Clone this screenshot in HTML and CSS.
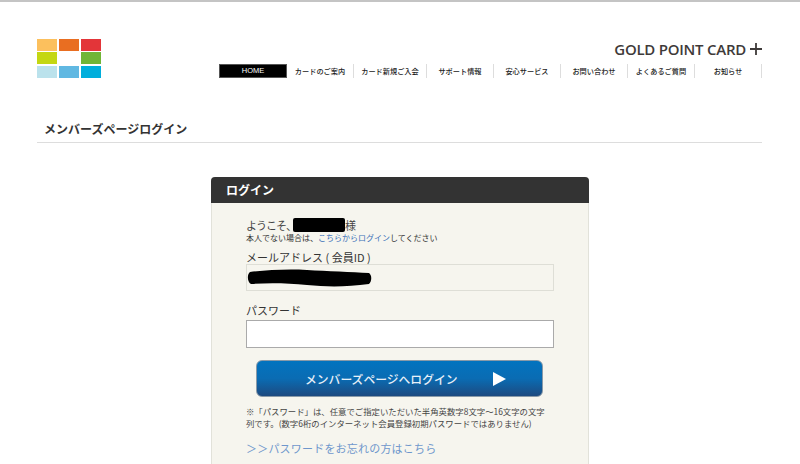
FILE: index.html
```html
<!DOCTYPE html>
<html lang="ja">
<head>
<meta charset="utf-8">
<title>メンバーズページログイン</title>
<link rel="stylesheet" href="styles.css">
</head>
<body>
<div class="page">
  <header class="header">
    <div class="logo">
      <span class="c1"></span><span class="c2"></span><span class="c3"></span>
      <span class="c4"></span><span class="c0"></span><span class="c5"></span>
      <span class="c6"></span><span class="c7"></span><span class="c8"></span>
    </div>
    <div class="header-right">
      <div class="brand">GOLD POINT CARD <svg class="plus" viewBox="0 0 12 12" width="12" height="12"><path d="M0 6H12M6 0V12" stroke="#3e3a39" stroke-width="1.8" fill="none"/></svg></div>
      <nav class="nav">
        <a class="nav-item home">HOME</a>
        <a class="nav-item">カードのご案内</a>
        <a class="nav-item wide">カード新規ご入会</a>
        <a class="nav-item">サポート情報</a>
        <a class="nav-item">安心サービス</a>
        <a class="nav-item">お問い合わせ</a>
        <a class="nav-item">よくあるご質問</a>
        <a class="nav-item">お知らせ</a>
      </nav>
    </div>
  </header>
  <h1 class="title">メンバーズページログイン</h1>
  <section class="card">
    <h2 class="card-head">ログイン</h2>
    <div class="card-body">
      <p class="welcome"><span class="greet">ようこそ、</span><span class="mask"></span>様</p>
      <p class="notice">本人でない場合は、<a class="link">こちらからログイン</a>してください</p>
      <label class="label">メールアドレス<span class="paren">(</span>会員ID<span class="paren">)</span></label>
      <div class="field readonly"><svg class="scribble" viewBox="0 0 125 18" width="125" height="18"><path d="M3 3C20 1 40 0 60 1C80 2 105 3 122 4C125 6 125 12 122 15C100 18 80 18 60 16C40 14 20 14 4 15C0 13 0 5 3 3Z" fill="#000"/></svg></div>
      <label class="label pw">パスワード</label>
      <div class="field input"></div>
      <button class="submit"><span>メンバーズページへログイン</span><svg class="arrow" viewBox="0 0 13 14" width="13" height="14"><path d="M0 0L13 7L0 14Z" fill="#fff"/></svg></button>
      <p class="note">※「パスワード」は、任意でご指定いただいた半角英数字8文字〜16文字の文字<br>列です。(数字6桁のインターネット会員登録初期パスワードではありません)</p>
      <a class="forgot">＞＞パスワードをお忘れの方はこちら</a>
    </div>
  </section>
</div>
</body>
</html>
```
FILE: styles.css
```css
* { box-sizing: border-box; }
html, body { margin: 0; padding: 0; height: 464px; overflow: hidden; background: #fff; }
body { border-top: 2px solid #c4c4c4; font-family: "Noto Sans CJK JP", "Liberation Sans", sans-serif; color: #333; }
.page { width: 725px; margin-left: 37px; }
.header { display: flex; justify-content: space-between; padding-top: 37px; height: 96px; }
.logo { display: grid; grid-template-columns: repeat(3, 20px); grid-auto-rows: 12px; gap: 1.4px 2px; width: 64px; height: 39px; }
.logo span { display: block; }
.c0 { background: #fff; }
.c1 { background: #fcc05d; }
.c2 { background: #e96e21; }
.c3 { background: #e33539; }
.c4 { background: #c4d712; }
.c5 { background: #70b536; }
.c6 { background: #bbe2ec; }
.c7 { background: #60b8e2; }
.c8 { background: #00aedc; }
.header-right { display: flex; flex-direction: column; align-items: flex-end; }
.brand { font-family: "Open Sans", "Liberation Sans", sans-serif; font-weight: 600; font-size: 15px; line-height: 20px; color: #3e3a39; display: flex; align-items: center; gap: 4px; letter-spacing: -.25px; }
.nav { display: flex; margin-top: 5px; }
.nav-item { width: 67px; height: 14px; font-size: 7.2px; line-height: 14px; text-align: center; color: #222; border-right: 1px solid #ddd; white-space: nowrap; font-weight: 500; }
.nav-item.wide { width: 73px; }
.nav-item.home { width: 68px; background: #000; color: #fff; border: 1px solid #555; font-family: "Liberation Sans", sans-serif; font-size: 7.5px; line-height: 12px; }
.title { margin: 0; height: 45px; padding: 22px 0 0 7px; font-size: 12px; line-height: 18px; font-weight: 700; color: #333; border-bottom: 1px solid #ddd; }
.card { width: 378px; margin: 34px 0 0 174px; border-radius: 4px 4px 0 0; border: 1px solid #e2e2da; border-top: 0; background: #f6f5ee; height: 300px; }
.card-head { margin: 0 -1px; height: 26px; background: #333; color: #fff; border-radius: 4px 4px 0 0; font-size: 12px; line-height: 25px; font-weight: 700; padding-left: 15px; }
.card-body { padding: 14px 34px 0; }
.welcome { margin: 0; font-size: 11px; line-height: 16px; color: #444; display: flex; align-items: center; }
.greet { letter-spacing: -1px; }
.mask { display: inline-block; width: 52px; height: 14px; background: #000; border-radius: 2px; margin-left: -3px; }
.notice { margin: -1px 0 0; font-size: 8px; line-height: 12px; color: #333; }
.link { color: #3a70b8; }
.label { display: block; font-size: 11px; line-height: 16px; color: #333; margin-top: 5px; }
.paren { margin: 0 2.5px; }
.label.pw { margin-top: 11px; }
.field { width: 308px; }
.readonly { height: 27px; margin-top: -1px; border: 1px solid #deded6; padding-top: 4px; }
.scribble { display: block; margin-left: 0; }
.input { height: 28px; background: #fff; border: 1px solid #aaa; margin-top: 2px; }
.submit { display: flex; align-items: center; width: 287px; height: 37px; margin: 12px 0 0 10px; padding: 0 36px 0 48px; justify-content: space-between; border: 1px solid #8a9aa8; border-radius: 6px; background: linear-gradient(#0273bf, #0a6cb3 50%, #1d4a80); color: #e8f0f8; font-family: inherit; font-size: 11.8px; font-weight: 500; }
.note { margin: 9px 0 0; font-size: 8.4px; line-height: 11.5px; color: #444; white-space: nowrap; }
.forgot { display: block; margin-top: 11px; font-size: 11px; line-height: 16px; color: #6f97cc; letter-spacing: .2px; }
```
